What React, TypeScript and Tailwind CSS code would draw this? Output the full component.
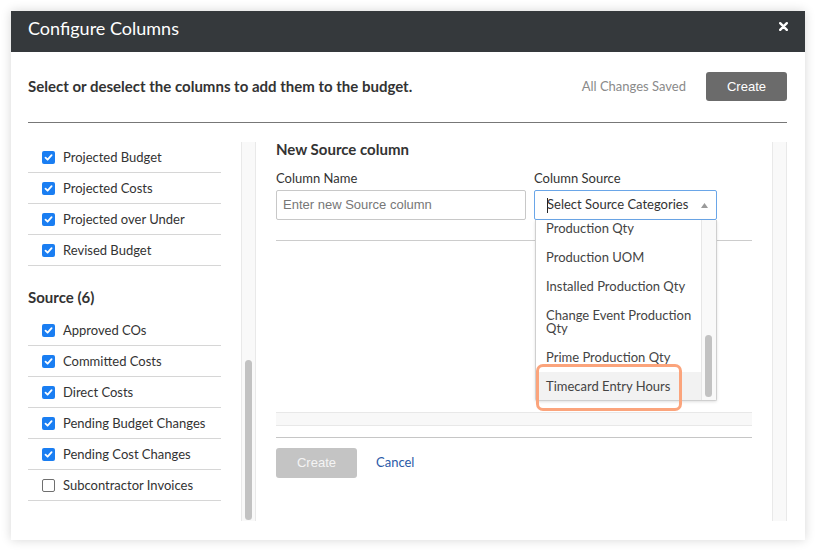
import React from 'react';

type Item = { label: string; checked: boolean };

const budgetItems: Item[] = [
  { label: 'Projected Budget', checked: true },
  { label: 'Projected Costs', checked: true },
  { label: 'Projected over Under', checked: true },
  { label: 'Revised Budget', checked: true },
];

const sourceItems: Item[] = [
  { label: 'Approved COs', checked: true },
  { label: 'Committed Costs', checked: true },
  { label: 'Direct Costs', checked: true },
  { label: 'Pending Budget Changes', checked: true },
  { label: 'Pending Cost Changes', checked: true },
  { label: 'Subcontractor Invoices', checked: false },
];

const options = [
  'Production Qty',
  'Production UOM',
  'Installed Production Qty',
  'Change Event Production Qty',
  'Prime Production Qty',
  'Timecard Entry Hours',
];

const Checkbox: React.FC<{ checked: boolean }> = ({ checked }) =>
  checked ? (
    <span className="w-[13px] h-[13px] rounded-[2px] bg-[#1a7ef2] flex items-center justify-center shrink-0">
      <svg width="9" height="9" viewBox="0 0 9 9">
        <path d="M1.5 4.6 L3.6 6.7 L7.6 2.2" fill="none" stroke="white" strokeWidth="1.8" strokeLinecap="round" strokeLinejoin="round" />
      </svg>
    </span>
  ) : (
    <span className="w-[13px] h-[13px] rounded-[2px] border border-[#6f6f6f] bg-white shrink-0" />
  );

const Row: React.FC<{ item: Item }> = ({ item }) => (
  <div className="h-[31px] border-b border-[#d6d6d6] flex items-center pl-[14px] gap-[8px] pt-[1px]">
    <Checkbox checked={item.checked} />
    <span className="text-[13px] text-[#333]">{item.label}</span>
  </div>
);

const Track: React.FC<{ thumb?: boolean }> = ({ thumb }) => (
  <div className="w-[15px] shrink-0 bg-[#f9f9f9] border-x border-[#e9e9e9] relative">
    {thumb && <div className="absolute left-[3px] w-[7px] top-[218px] bottom-[1px] rounded-full bg-[#c2c2c2]" />}
  </div>
);

export default function App() {
  return (
    <div className="w-[816px] h-[551px] bg-white p-[11px] font-['Lato','Liberation_Sans',sans-serif]">
      <div className="w-[794px] h-[529px] bg-white flex flex-col shadow-[0_0_10px_rgba(0,0,0,0.16)]">
        {/* header */}
        <div className="h-[41px] bg-[#35393c] flex justify-between pl-[17px] pr-[17px] shrink-0">
          <span className="text-white text-[18px] leading-[35px]">Configure Columns</span>
          <svg className="mt-[11px]" width="9" height="9" viewBox="0 0 9 9">
            <path d="M1.2 1.2 L7.8 7.8 M7.8 1.2 L1.2 7.8" stroke="white" strokeWidth="2.4" strokeLinecap="round" />
          </svg>
        </div>

        {/* body */}
        <div className="flex-1 flex flex-col pl-[17px] pr-[18px] pt-[20px] pb-[19px]">
          <div className="h-[29px] flex items-center justify-between">
            <span className="text-[15px] font-bold text-[#333]">Select or deselect the columns to add them to the budget.</span>
            <div className="flex items-center gap-[20px]">
              <span className="text-[13px] text-[#8a8a8a]">All Changes Saved</span>
              <button className="w-[81px] h-[29px] rounded-[3px] bg-[#6b6b6b] text-white text-[13px] font-['Liberation_Sans',sans-serif]">
                Create
              </button>
            </div>
          </div>
          <div className="mt-[21px] border-t border-[#777]" />

          <div className="mt-[19px] flex-1 flex min-h-0">
            {/* left list */}
            <div className="w-[213px] pr-[20px] overflow-hidden">
              {budgetItems.map((i) => (
                <Row key={i.label} item={i} />
              ))}
              <div className="mt-[21px] mb-[8px] h-[20px] leading-[20px] text-[15px] font-bold text-[#333]">Source (6)</div>
              {sourceItems.map((i) => (
                <Row key={i.label} item={i} />
              ))}
            </div>
            <Track thumb />

            {/* right form */}
            <div className="flex-1 flex flex-col px-[20px]">
              <div className="text-[15px] font-bold text-[#333] leading-[14px] mb-[2px]">New Source column</div>
              <div className="mt-[12px] flex gap-[8px]">
                <div className="w-[250px]">
                  <div className="text-[13px] text-[#333] leading-[16px]">Column Name</div>
                  <div className="mt-[4px] h-[30px] border border-[#c8c8c8] rounded-[2px] flex items-center px-[6px] text-[13px] text-[#777] font-['Liberation_Sans',sans-serif]">
                    Enter new Source column
                  </div>
                </div>
                <div className="w-[183px]">
                  <div className="text-[13px] text-[#333] leading-[16px]">Column Source</div>
                  <div className="relative mt-[4px]">
                    <div className="h-[30px] border border-[#6aa6e8] rounded-[2px] flex items-center pl-[12px] pr-[8px]">
                      <span className="w-px h-[15px] bg-[#222]" />
                      <span className="text-[13px] text-[#333] flex-1 -ml-[1px]">Select Source Categories</span>
                      <svg width="7" height="5" viewBox="0 0 7 5">
                        <path d="M0 5 L3.5 0 L7 5 Z" fill="#9a9a9a" />
                      </svg>
                    </div>
                    {/* dropdown */}
                    <div className="absolute left-[1px] top-[30px] w-[182px] h-[181px] bg-white border border-[#cfcfcf] border-t-0 rounded-b-[2px] shadow-[0_1px_3px_rgba(0,0,0,0.12)] flex z-10">
                      <div className="flex-1 overflow-hidden">
                        <div className="-mt-[6px]">
                          {options.map((o, idx) => (
                            <div
                              key={o}
                              className={`py-[8px] pl-[10px] pr-[6px] text-[13px] leading-[13px] text-[#444] ${idx === options.length - 1 ? 'bg-[#f2f2f2]' : ''}`}
                            >
                              {o}
                            </div>
                          ))}
                        </div>
                      </div>
                      <div className="w-[15px] shrink-0 bg-[#f9f9f9] border-l border-[#e6e6e6] relative">
                        <div className="absolute left-[3px] w-[7px] top-[115px] h-[62px] rounded-full bg-[#c2c2c2]" />
                      </div>
                      <div className="absolute left-0 top-[144px] w-[146px] h-[47px] border-[3px] border-[#fba47c] rounded-[7px]" />
                    </div>
                  </div>
                </div>
              </div>
              <div className="mt-[20px] border-t border-[#cccccc]" />

              <div className="mt-[171px] h-[14px] bg-[#f8f8f8] border-y border-[#e8e8e8]" />
              <div className="mt-[11px] border-t border-[#c6c6c6]" />
              <div className="mt-[10px] flex items-center gap-[19px]">
                <button className="w-[81px] h-[30px] rounded-[3px] bg-[#c4c4c4] text-[#f4f4f4] text-[13px] font-['Liberation_Sans',sans-serif]">
                  Create
                </button>
                <span className="text-[13px] text-[#2a5aa8]">Cancel</span>
              </div>
            </div>
            <Track />
          </div>
        </div>
      </div>
    </div>
  );
}
